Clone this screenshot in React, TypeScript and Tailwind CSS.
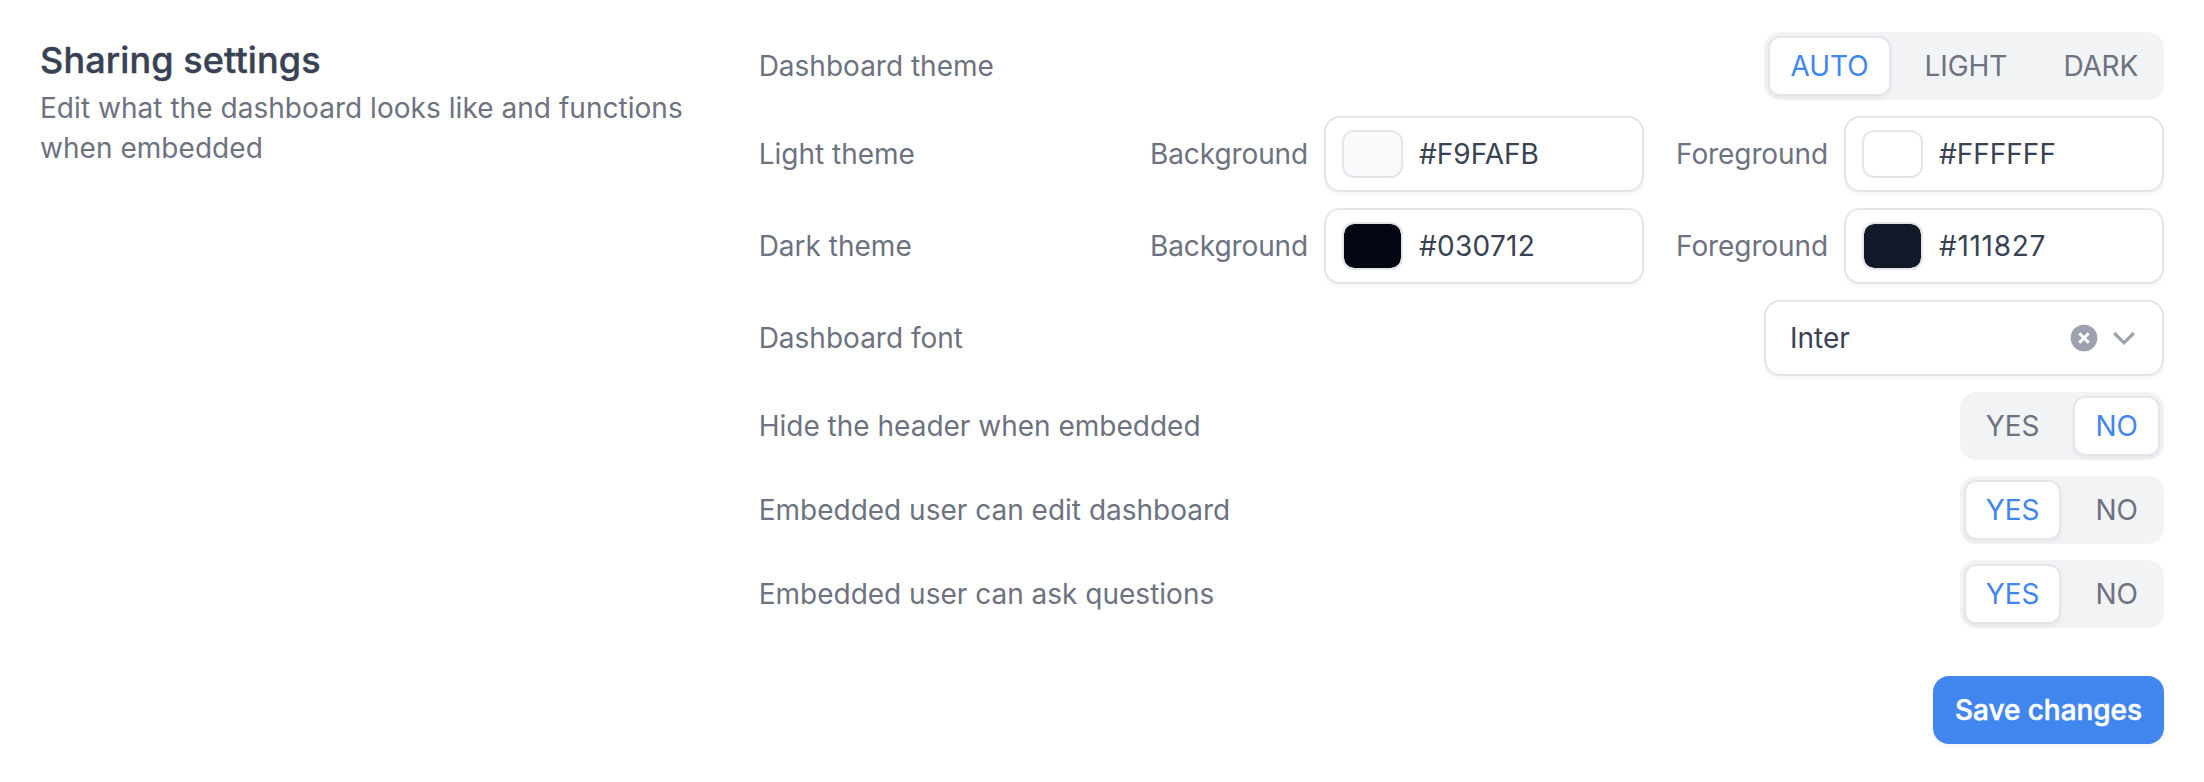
import React from 'react';

type ToggleProps = { options: string[]; value: string };

function Toggle({ options, value }: ToggleProps) {
  return (
    <div className="flex gap-3 rounded-2xl bg-[#f2f3f5] p-1">
      {options.map((option) => (
        <button
          key={option}
          className={
            option === value
              ? 'h-[60px] rounded-xl border-2 border-[#e5e6eb] bg-white px-5 text-[#4186ee] shadow-[0_2px_4px_rgba(0,0,0,0.05)]'
              : 'h-[60px] rounded-xl border-2 border-transparent px-5'
          }
        >
          <span className={option === 'LIGHT' || option === 'AUTO' ? 'tracking-[-0.05px]' : option === 'DARK' ? 'tracking-[-0.2px]' : ''}>
            {option}
          </span>
        </button>
      ))}
    </div>
  );
}

type ColorFieldProps = { label: string; color: string; tracking?: string };

function ColorField({ label, color, tracking = '' }: ColorFieldProps) {
  return (
    <div className="flex items-center gap-4">
      <span className="tracking-[-0.1px]">{label}</span>
      <div className="flex h-[76px] w-80 items-center gap-4 rounded-2xl border-2 border-[#e5e6eb] bg-white px-4 text-[#384252] shadow-[0_2px_4px_rgba(0,0,0,0.05)]">
        <span
          className="h-12 w-[61px] rounded-xl border-2 border-[#e5e6eb] bg-clip-padding"
          style={{ backgroundColor: color }}
        />
        <span className={tracking}>{color}</span>
      </div>
    </div>
  );
}

function Row({ label, children }: { label: string; children: React.ReactNode }) {
  return (
    <div className="flex items-center justify-between">
      <span>{label}</span>
      {children}
    </div>
  );
}

function FontSelect() {
  return (
    <div className="flex h-[76px] w-[400px] items-center gap-2 rounded-2xl border-2 border-[#e5e6eb] bg-white pr-[22px] pl-6 text-[#384252] shadow-[0_2px_4px_rgba(0,0,0,0.05)]">
      <span className="flex-1">Inter</span>
      <svg className="size-8" viewBox="0 0 32 32" fill="none">
        <circle cx="16" cy="16" r="13.3" fill="#9ca1af" />
        <path d="M11.3 11.3l9.4 9.4M20.7 11.3l-9.4 9.4" stroke="white" strokeWidth="3" />
      </svg>
      <svg className="size-8" viewBox="0 0 32 32" fill="none">
        <path d="M6.2 11l9.8 9.8l9.8-9.8" stroke="#9ca1af" strokeWidth="3.2" />
      </svg>
    </div>
  );
}

export default function App() {
  return (
    <main className="grid h-[782px] grid-cols-3 gap-8 bg-white px-10 pt-8 font-['Inter',sans-serif] text-[28px] leading-10 text-[#6d7280]">
      <section>
        <h2 className="text-4xl leading-[56px] font-medium tracking-[0.12px] text-[#384252] [-webkit-text-stroke:0.4px_#384252]">
          Sharing settings
        </h2>
        <p className="tracking-[0.04px]">Edit what the dashboard looks like and functions when embedded</p>
      </section>
      <section className="col-span-2 flex flex-col gap-4">
        <Row label="Dashboard theme">
          <Toggle options={['AUTO', 'LIGHT', 'DARK']} value="AUTO" />
        </Row>
        <Row label="Light theme">
          <div className="flex gap-8">
            <ColorField label="Background" color="#F9FAFB" />
            <ColorField label="Foreground" color="#FFFFFF" />
          </div>
        </Row>
        <Row label="Dark theme">
          <div className="flex gap-8">
            <ColorField label="Background" color="#030712" tracking="tracking-[0.25px]" />
            <ColorField label="Foreground" color="#111827" tracking="tracking-[0.7px]" />
          </div>
        </Row>
        <Row label="Dashboard font">
          <FontSelect />
        </Row>
        <Row label="Hide the header when embedded">
          <Toggle options={['YES', 'NO']} value="NO" />
        </Row>
        <Row label="Embedded user can edit dashboard">
          <Toggle options={['YES', 'NO']} value="YES" />
        </Row>
        <Row label="Embedded user can ask questions">
          <Toggle options={['YES', 'NO']} value="YES" />
        </Row>
        <button className="mt-8 h-[68px] w-[231px] self-end rounded-2xl bg-[#4186ee] font-medium tracking-[-0.05px] text-white shadow-[0_2px_4px_rgba(0,0,0,0.05)] [-webkit-text-stroke:0.5px_white]">
          Save changes
        </button>
      </section>
    </main>
  );
}
